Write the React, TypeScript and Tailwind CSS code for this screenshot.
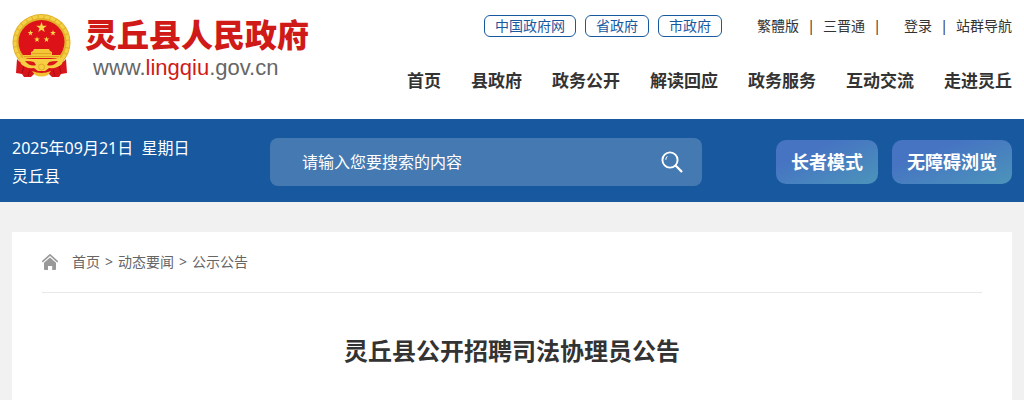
import { Fragment } from "react";

const portals = ["中国政府网", "省政府", "市政府"];

const navItems = [
  "首页",
  "县政府",
  "政务公开",
  "解读回应",
  "政务服务",
  "互动交流",
  "走进灵丘",
];

const crumbs = ["首页", "动态要闻", "公示公告"];

const STAR =
  "M0 -5 L1.2 -1.6 L4.8 -1.5 L1.9 0.6 L2.9 4 L0 2 L-2.9 4 L-1.9 0.6 L-4.8 -1.5 L-1.2 -1.6 Z";

function Emblem() {
  return (
    <svg viewBox="0 0 60 66" className="h-[66px] w-[60px] shrink-0" aria-hidden="true">
      <ellipse cx="29.5" cy="29.5" rx="29" ry="28.5" fill="#e3b02a" />
      <ellipse cx="29.5" cy="29.5" rx="26.5" ry="26" fill="none" stroke="#f3d145" strokeWidth="3" strokeDasharray="5 1" />
      <path d="M5 46 Q8 50 12 50 H47 Q51 50 54 46 L55 60 L49 61 L47 64 L40 64 L36 60 H23 L19 64 L12 64 L10 61 L4 60 Z" fill="#d7151a" />
      <path d="M12 53 L10 60 M47 53 L49 60 M18 57 L16 63 M41 57 L43 63" stroke="#a80d12" strokeWidth="1" fill="none" />
      <ellipse cx="29.5" cy="29" rx="23" ry="22" fill="#dc1218" />
      <path d={STAR} transform="translate(29.5 14.5) scale(1.1)" fill="#fbd84a" />
      <path d={STAR} transform="translate(18.5 20) scale(.6)" fill="#fbd84a" />
      <path d={STAR} transform="translate(41 20) scale(.6)" fill="#fbd84a" />
      <path d={STAR} transform="translate(25 26.5) scale(.6)" fill="#fbd84a" />
      <path d={STAR} transform="translate(34.5 26.5) scale(.6)" fill="#fbd84a" />
      <path d="M21 38 L22 36 H37 L38 38 L40 39 V42 H48 V45 H11 V42 H19 V39 Z" fill="#f4c536" />
      <path d="M20 40.5 H39 M12 43.5 H47" stroke="#d99018" strokeWidth=".7" />
      <path d="M7 44 Q10 46 29.5 46 Q49 46 52 44 L50 51 Q45 56 37 55 L33 58 H26 L22 55 Q14 56 9 51 Z" fill="#f6cf43" />
      <path d="M13 48 Q19 48 22 49 L24 52 Q18 54 13 48 M46 48 Q40 48 37 49 L35 52 Q41 54 46 48" fill="#d7151a" />
      <path d="M20 58 Q29.5 62 39 58 L36 62 Q29.5 65 23 62 Z" fill="#f2c230" />
      <circle cx="29.5" cy="54" r="3" fill="#f6cf43" stroke="#d99018" strokeWidth=".6" />
    </svg>
  );
}

function SearchIcon() {
  return (
    <svg viewBox="0 0 22 22" className="h-[22px] w-[22px]" fill="none" stroke="#fff" strokeLinecap="round" aria-hidden="true">
      <circle cx="9" cy="9" r="7.6" strokeWidth="1.9" />
      <path d="M14.8 14.8 L20.4 20.4" strokeWidth="2.2" />
      <path d="M4.8 8.4 Q4.8 6.8 6 5.6" strokeWidth="1" />
    </svg>
  );
}

function HomeIcon() {
  return (
    <svg viewBox="0 0 16 16" className="h-4 w-4" fill="#999" aria-hidden="true">
      <path d="M0.8 7.4 L8 0.9 L15.2 7.4" fill="none" stroke="#999" strokeWidth="1.6" strokeLinecap="round" strokeLinejoin="round" />
      <path d="M8 3.4 L14 8.8 V15 Q14 16 13 16 H10.2 V12 H6 V16 H3 Q2 16 2 15 V8.8 Z" />
    </svg>
  );
}

function Divider() {
  return <span className="w-6 text-center">|</span>;
}

function Header() {
  return (
    <header className="mx-auto flex max-w-[1200px] justify-between px-3 pb-[26px]">
      <a href="#" className="flex gap-3 self-start pt-[13px]">
        <Emblem />
        <span className="flex flex-col pt-1 pl-px font-['Liberation_Sans','Noto_Sans_CJK_SC',sans-serif]">
          <span className="text-[32px] leading-[38px] font-black whitespace-nowrap text-[#cf1a17]">
            灵丘县人民政府
          </span>
          <span className="pl-2 text-[22px] leading-[26px] text-[#666]">
            www.<span className="text-[#cf1a17]">lingqiu</span>.gov.cn
          </span>
        </span>
      </a>

      <div className="flex flex-col items-end pt-[15px]">
        <div className="flex items-center text-sm whitespace-nowrap">
          <div className="flex gap-[9px]">
            {portals.map((name) => (
              <a
                key={name}
                href="#"
                className="rounded-md border border-[#17599f] px-[10px] leading-5 text-[#17599f]"
              >
                {name}
              </a>
            ))}
          </div>
          <div className="ml-[35px] flex leading-5">
            <a href="#">繁體版</a>
            <Divider />
            <a href="#">三晋通</a>
            <Divider />
          </div>
          <div className="ml-[15px] flex leading-5">
            <a href="#">登录</a>
            <Divider />
            <a href="#">站群导航</a>
          </div>
        </div>
        <nav className="mt-8 flex gap-[30px] text-[17px] leading-6 font-bold whitespace-nowrap">
          {navItems.map((item) => (
            <a key={item} href="#">
              {item}
            </a>
          ))}
        </nav>
      </div>
    </header>
  );
}

function SearchBar() {
  return (
    <div className="bg-[#17589f]">
      <div className="mx-auto flex max-w-[1200px] items-center px-3 pt-[15px] pb-3">
        <div className="w-[258px] text-base leading-7 whitespace-nowrap text-white">
          <p>2025年09月21日&nbsp; 星期日</p>
          <p>灵丘县</p>
        </div>
        <form
          className="flex h-12 w-[432px] items-center rounded-lg bg-white/20 pr-[19px] pl-8"
          onSubmit={(e) => e.preventDefault()}
        >
          <input
            type="text"
            aria-label="请输入您要搜索的内容"
            placeholder="请输入您要搜索的内容"
            className="min-w-0 flex-1 bg-transparent text-base leading-6 text-white outline-none placeholder:text-white"
          />
          <button type="submit" aria-label="搜索">
            <SearchIcon />
          </button>
        </form>
        <div className="flex flex-1 justify-end gap-[14px] text-lg font-bold whitespace-nowrap text-white">
          <button type="button" className="h-11 rounded-[10px] bg-linear-to-br from-[#4674c2] from-30% to-[#4c94ba] px-[15px]">
            长者模式
          </button>
          <button type="button" className="h-11 rounded-[10px] bg-linear-to-br from-[#4674c2] from-30% to-[#4c94ba] px-[15px]">
            无障碍浏览
          </button>
        </div>
      </div>
    </div>
  );
}

function Article() {
  return (
    <main className="mx-auto max-w-[1200px] px-3 pt-[30px]">
      <article className="min-h-[calc(100vh-232px)] bg-white px-[30px]">
        <div className="flex items-center border-b border-[#e8e8e8] py-5 text-sm text-[#666]">
          <HomeIcon />
          <div className="ml-[14px] flex leading-5">
            {crumbs.map((name, i) => (
              <Fragment key={name}>
                {i > 0 && <span className="w-[18px] text-center">&gt;</span>}
                <a href="#">{name}</a>
              </Fragment>
            ))}
          </div>
        </div>
        <h1 className="pt-10 text-center text-2xl leading-9 font-bold">
          灵丘县公开招聘司法协理员公告
        </h1>
      </article>
    </main>
  );
}

export default function App() {
  return (
    <div className="min-h-screen bg-[#f1f1f1] font-['Noto_Sans','Noto_Sans_CJK_SC',sans-serif] text-[#333]">
      <div className="bg-white">
        <Header />
      </div>
      <SearchBar />
      <Article />
    </div>
  );
}
